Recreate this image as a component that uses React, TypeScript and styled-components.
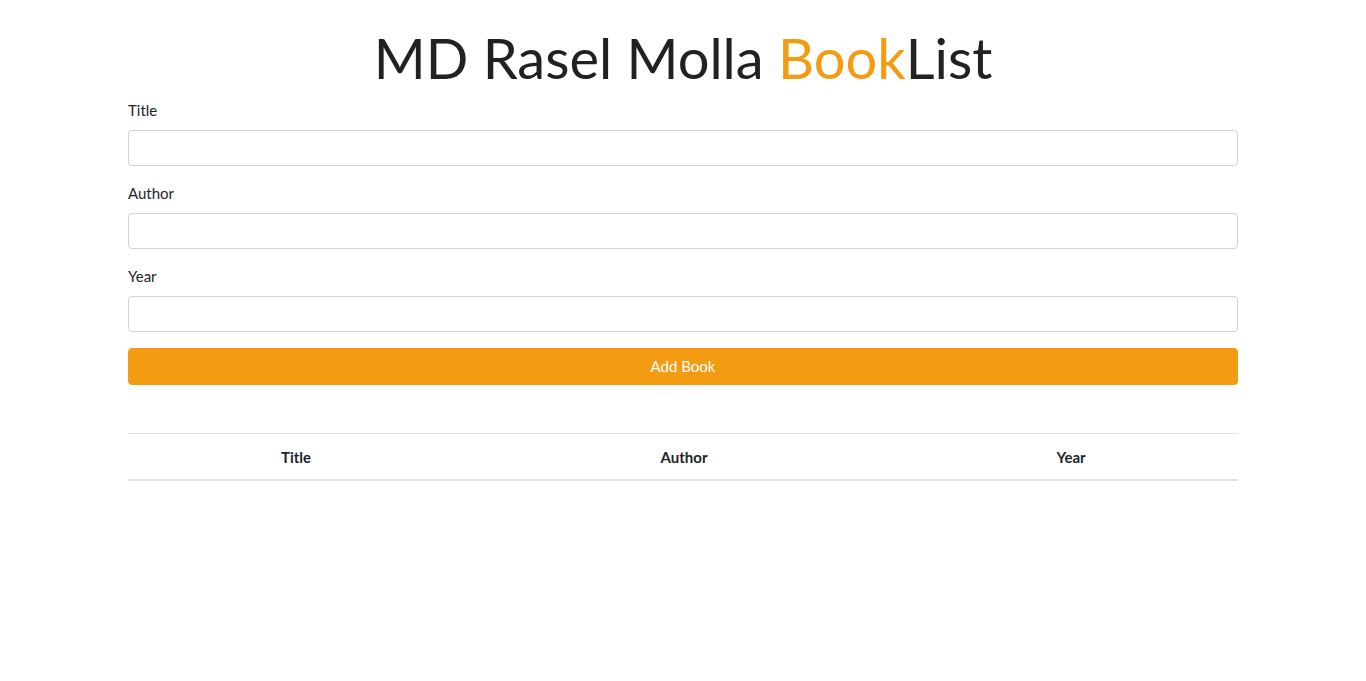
import React from "react";
import styled, { createGlobalStyle } from "styled-components";

const Global = createGlobalStyle`
  * { box-sizing: border-box; }
  body {
    margin: 0;
    font-family: Lato, "Noto Sans", sans-serif;
    font-size: 15px;
    line-height: 1.5;
    color: #212529;
    background: #fff;
  }
`;

const Container = styled.div`
  width: 1140px;
  margin: 0 auto;
  padding: 0 15px;
`;

const Heading = styled.h1`
  margin: 24px 0 8px;
  text-align: center;
  font-family: Lato, sans-serif;
  font-size: 56px;
  font-weight: 400;
  line-height: 1.2;
  color: #212121;
`;

const Accent = styled.span`
  color: #f39c12;
`;

const Form = styled.form`
  display: flex;
  flex-direction: column;
`;

const Group = styled.div`
  margin-bottom: 16px;
`;

const Label = styled.label`
  display: block;
  margin-bottom: 8px;
  font-size: 15px;
`;

const Input = styled.input`
  display: block;
  width: 100%;
  height: 36.5px;
  padding: 6px 12px;
  font-family: inherit;
  font-size: 15px;
  border: 1px solid #ced4da;
  border-radius: 4px;
  background: #fff;
  outline: none;
`;

const Button = styled.button`
  display: block;
  width: 100%;
  height: 36.5px;
  padding: 6px 12px;
  font-family: inherit;
  font-size: 15px;
  color: #fff;
  background: #f39c12;
  border: 1px solid #f39c12;
  border-radius: 4px;
  cursor: pointer;
`;

const Table = styled.table`
  width: 100%;
  margin-top: 48px;
  border-collapse: collapse;
`;

const Th = styled.th<{ $w: number }>`
  width: ${(p) => p.$w}px;
  padding: 12px 12px 11px;
  text-align: center;
  font-weight: 700;
  font-size: 15px;
  border-top: 1px solid #dee2e6;
  border-bottom: 2px solid #dee2e6;
`;

export default function App() {
  return (
    <>
      <Global />
      <Container>
        <Heading>
          MD Rasel Molla <Accent>Book</Accent>List
        </Heading>
        <Form onSubmit={(e) => e.preventDefault()}>
          <Group>
            <Label htmlFor="title">Title</Label>
            <Input id="title" type="text" />
          </Group>
          <Group>
            <Label htmlFor="author">Author</Label>
            <Input id="author" type="text" />
          </Group>
          <Group>
            <Label htmlFor="year">Year</Label>
            <Input id="year" type="text" />
          </Group>
          <Button type="submit">Add Book</Button>
        </Form>
        <Table>
          <thead>
            <tr>
              <Th $w={336}>Title</Th>
              <Th $w={440}>Author</Th>
              <Th $w={334}>Year</Th>
            </tr>
          </thead>
          <tbody></tbody>
        </Table>
      </Container>
    </>
  );
}
